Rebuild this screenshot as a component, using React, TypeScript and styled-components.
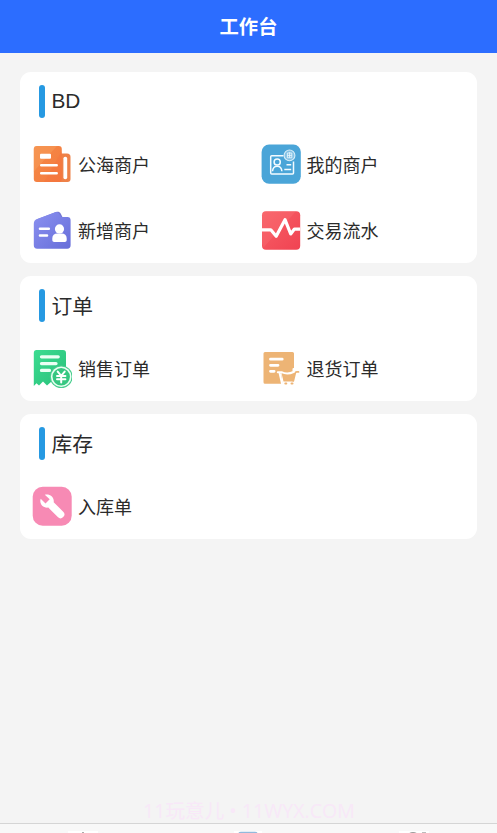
import React from "react";
import styled, { createGlobalStyle } from "styled-components";

const GlobalStyle = createGlobalStyle`
  * { box-sizing: border-box; }
  body {
    margin: 0;
    background: #f4f4f4;
    font-family: "Liberation Sans", "Noto Sans CJK SC", sans-serif;
    color: #2b2b2b;
    overflow: hidden;
  }
`;

const Screen = styled.div`
  height: 833px;
  display: flex;
  flex-direction: column;
  overflow: hidden;
`;

const Header = styled.header`
  flex: none;
  height: 53px;
  padding-bottom: 2px;
  display: flex;
  align-items: center;
  justify-content: center;
  background: #2c6dff;
  color: #fff;
  font-family: "Noto Sans CJK SC", sans-serif;
  font-size: 19.3px;
  font-weight: 700;
`;

const Content = styled.main`
  flex: 1;
  display: flex;
  flex-direction: column;
  gap: 13.2px;
  padding: 19px 20px 0;
`;

const Card = styled.section`
  background: #fff;
  border-radius: 11px;
  padding-bottom: 0.5px;
`;

const CardTitle = styled.h2`
  height: 58.5px;
  margin: 0;
  padding-left: 18.5px;
  display: flex;
  align-items: center;
  gap: 7px;
  font-size: 20.8px;
  font-weight: 400;
  line-height: 30px;
`;

const TitleText = styled.span<{ $latin: boolean }>`
  padding-top: ${(p) => (p.$latin ? 0 : 3)}px;
`;

const Marker = styled.span`
  width: 6px;
  height: 33px;
  border-radius: 3px;
  background: #2699e2;
`;

const Grid = styled.div`
  display: grid;
  grid-template-columns: 1fr 1fr;
  grid-auto-rows: 66px;
`;

const Entry = styled.div`
  display: flex;
  align-items: center;
  gap: 6px;
  padding-left: 12px;
  font-size: 18px;
  line-height: 26px;
  white-space: nowrap;

  svg {
    flex: none;
    display: block;
  }
`;

const Label = styled.span`
  padding-top: 4px;
`;

const Watermark = styled.div`
  height: 25px;
  flex: none;
  padding-left: 1px;
  text-align: center;
  color: #f8e8f8;
  font-family: "Open Sans", "Noto Sans CJK SC", sans-serif;
  font-size: 19.6px;
  line-height: 26px;
`;

const TabBar = styled.nav`
  flex: none;
  height: 10px;
  border-top: 1px solid #d5d5d5;
  background: #f8f8f8;
  display: grid;
  grid-template-columns: repeat(3, 1fr);
  justify-items: center;
  overflow: hidden;

  svg {
    display: block;
    margin-top: 7px;
  }
`;

const Icon = ({ children }: { children: React.ReactNode }) => (
  <svg width="40" height="40" viewBox="0 0 40 40" fill="none">
    {children}
  </svg>
);

const Shade = ({ id, from, to }: { id: string; from: string; to: string }) => (
  <linearGradient id={id} x1="0" y1="0" x2="1" y2="1">
    <stop offset="0" stopColor={from} />
    <stop offset="1" stopColor={to} />
  </linearGradient>
);

const NewsIcon = () => (
  <Icon>
    <defs><Shade id="news" from="#f58a45" to="#f47a40" /></defs>
    <path d="M28 9.5h7a3.5 3.5 0 0 1 3.5 3.5v22a3 3 0 0 1-3 3H26z" fill="#ee8148" />
    <rect x="31.4" y="12.7" width="3.8" height="22.5" rx="1.8" fill="#fff" />
    <rect x="1.8" y="2" width="28" height="36" rx="3" fill="url(#news)" />
    <path d="M29.8 7 12 38h14.8a3 3 0 0 0 3-3z" fill="#f46d3c" opacity=".3" />
    <path d="M5 2h20L4 25l-2.2 3V5a3 3 0 0 1 3-3z" fill="#f8a867" opacity=".35" />
    <rect x="8" y="9.7" width="11" height="5" rx="1" fill="#fff" />
    <path d="M9.2 21.2h15.5M9.2 29.2h15.5" stroke="#fff" strokeWidth="2.5" strokeLinecap="round" />
  </Icon>
);

const CustomerIcon = () => (
  <Icon>
    <rect x=".6" y=".6" width="39.2" height="39.2" rx="7.5" fill="#4aa5d8" />
    <g stroke="#f3fbff" strokeWidth="1.5">
      <path d="M22.5 11.8H10.700a1 1 0 0 0-1 1v16.200a1 1 0 0 0 1 1h20.800a1 1 0 0 0 1-1V17.500" />
      <circle cx="16.200" cy="18" r="3.100" />
      <path d="M11.500 27.300c.3-3.200 1.900-5.100 4.700-5.100s4.400 1.900 4.700 5.100M25.500 20.700h4.700M23.300 25.600h6.900" />
    </g>
    <circle cx="28.500" cy="11.400" r="5.400" fill="#83c1e4" stroke="#d6edf8" strokeWidth="1.100" />
    <path d="M26.400 9h4.400v4.800h-4.400zM26.400 11.400h4.400M28.600 8.200v5.600" stroke="#eef9ff" strokeWidth=".8" />
  </Icon>
);

const AddCustomerIcon = () => (
  <Icon>
    <defs><Shade id="add" from="#8b91f0" to="#666dd9" /></defs>
    <path d="M4.5 9.5 24 2.1c2-.7 3.7-.2 4.8 1.6L32 10v10H4z" fill="#7478d3" />
    <path d="M1.8 14c0-2.5 1-4.2 3.3-5L22.5 2.4c2-.7 3.6-.1 4.7 1.5l2 3h6a3.3 3.3 0 0 1 3.4 3.4v25a3.4 3.4 0 0 1-3.4 3.4H5.2a3.4 3.4 0 0 1-3.4-3.4z" fill="url(#add)" />
    <path d="M8 18.7h8.8M8 25.5h7" stroke="#fff" strokeWidth="2.6" strokeLinecap="round" />
    <circle cx="27.500" cy="18.900" r="4.600" fill="#fff" />
    <path d="M20.300 30v-1.700c0-3.200 2-4.900 5.100-4.900h4.200c3.100 0 5.100 1.700 5.100 4.900V30c0 1.200-.7 1.900-1.900 1.900H22.200c-1.200 0-1.900-.7-1.900-1.900z" fill="#fff" />
  </Icon>
);

const FlowIcon = () => (
  <Icon>
    <defs><Shade id="flow" from="#f86067" to="#f04352" /></defs>
    <rect x="1" y="1.2" width="38.2" height="38.5" rx="4" fill="url(#flow)" />
    <path d="M5 1.2h30L3 37a4 4 0 0 1-2-3V5.2a4 4 0 0 1 4-4z" fill="#ff8585" opacity=".2" />
    <path d="M1 19.800h8.800l5.400 6.500L24 9.700l5.700 14.200 3.700-4.800h5.800" stroke="#fff" strokeWidth="3.200" strokeLinejoin="round" />
  </Icon>
);

const SalesIcon = () => (
  <Icon>
    <defs><Shade id="sales" from="#3cdc91" to="#28bf79" /></defs>
    <path d="M5 2h26a3 3 0 0 1 3 3v32l-5-3.5-4.5 4-5-4-4.5 4-4-4-4 4-2.5-2.2L1.8 38V5A3 3 0 0 1 5 2z" fill="url(#sales)" />
    <path d="M9.5 8.8h16.7M9.5 15.6H24M9.5 22.4h8" stroke="#eafff3" strokeWidth="3.3" strokeLinecap="round" />
    <circle cx="29.200" cy="28.800" r="11.400" fill="#49cd8e" />
    <circle cx="29.200" cy="28.800" r="10.300" fill="#eafff3" />
    <circle cx="29.200" cy="28.800" r="8.700" fill="#36c781" />
    <path d="m25.700 23.600 3.500 4.200 3.500-4.200M29.200 28v6.500M25 28h8.400M25 31.300h8.400" stroke="#fff" strokeWidth="2" strokeLinecap="round" />
  </Icon>
);

const ReturnIcon = () => (
  <Icon>
    <path d="M4 4h27.500A1.500 1.500 0 0 1 33 5.500V25H20l1.500 10.800H4a1.500 1.500 0 0 1-1.500-1.500V5.500A1.500 1.500 0 0 1 4 4z" fill="#edb475" />
    <path d="M9.500 11.200h11.700M9.500 17.300H17M9.500 23.300h3.600" stroke="#fff" strokeWidth="2.800" strokeLinecap="round" />
    <path d="M20.500 25h13.800l-2.300 8.600H22.500z" fill="#edb475" />
    <path d="M16.800 24.200h3.700c3.500 1.600 8.300 1.600 12-.2v-3" stroke="#fff" strokeWidth="2" strokeLinecap="round" strokeLinejoin="round" />
    <path d="M18.700 25.500 21 35.500" stroke="#fff" strokeWidth="2" strokeLinecap="round" />
    <path d="m32.300 33 1.900-7.800c.2-.9.700-1.300 1.500-1.300h1.800" stroke="#edb475" strokeWidth="1.700" strokeLinecap="round" />
    <path d="M24.300 35.500h1M30.500 35.500h1" stroke="#edb475" strokeWidth="2" strokeLinecap="round" />
  </Icon>
);

const WrenchIcon = () => (
  <Icon>
    <rect x=".7" y=".7" width="39" height="39" rx="10" fill="#f78ab4" />
    <path d="M12.800 8.700c4.600-1.300 9.700 2.100 8.900 7.500l9.500 9.500a3.800 3.800 0 0 1-5.400 5.400l-9.500-9.500c-5.400.8-9.300-4-7.600-8.900l4.800 4.800 4.200-4.200z" fill="#fff" />
  </Icon>
);

type Item = { label: string; icon: React.ReactNode };

const sections: { title: string; items: Item[] }[] = [
  {
    title: "BD",
    items: [
      { label: "公海商户", icon: <NewsIcon /> },
      { label: "我的商户", icon: <CustomerIcon /> },
      { label: "新增商户", icon: <AddCustomerIcon /> },
      { label: "交易流水", icon: <FlowIcon /> },
    ],
  },
  {
    title: "订单",
    items: [
      { label: "销售订单", icon: <SalesIcon /> },
      { label: "退货订单", icon: <ReturnIcon /> },
    ],
  },
  { title: "库存", items: [{ label: "入库单", icon: <WrenchIcon /> }] },
];

export default function App() {
  return (
    <>
      <GlobalStyle />
      <Screen>
        <Header>工作台</Header>
        <Content>
          {sections.map((section) => (
            <Card key={section.title}>
              <CardTitle>
                <Marker />
                <TitleText $latin={/^[A-Z]+$/.test(section.title)}>{section.title}</TitleText>
              </CardTitle>
              <Grid>
                {section.items.map((item) => (
                  <Entry key={item.label}>
                    {item.icon}
                    <Label>{item.label}</Label>
                  </Entry>
                ))}
              </Grid>
            </Card>
          ))}
        </Content>
        <Watermark>11玩意儿 • 11WYX.COM</Watermark>
        <TabBar>
          <svg width="30" height="24" viewBox="0 0 30 24">
            <path d="M0 0h30v2H0z" fill="#fff" />
            <path d="M14 1h2v2h-2z" fill="#aaa" />
          </svg>
          <svg width="28" height="24" viewBox="0 0 28 24">
            <path d="M0 0h28v2H0z" fill="#fff" />
            <rect x="4" y=".8" width="20" height="20" rx="3" fill="#91b9dc" />
          </svg>
          <svg width="30" height="24" viewBox="0 0 30 24">
            <path d="M0 0h30v2H0z" fill="#fff" />
            <circle cx="14" cy="8" r="7" fill="#999" />
            <path d="M23 1h4v2h-4z" fill="#bbb" />
          </svg>
        </TabBar>
      </Screen>
    </>
  );
}
